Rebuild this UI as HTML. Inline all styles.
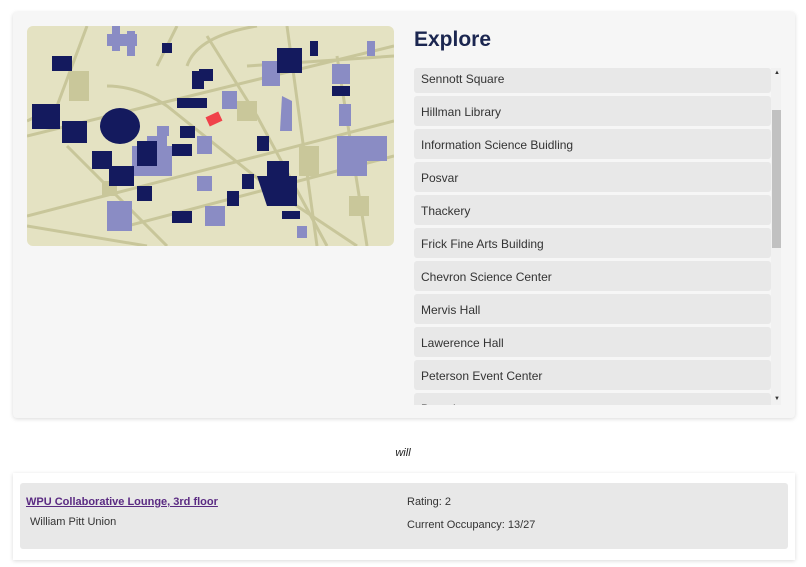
<!DOCTYPE html>
<html><head><style>
body{margin:0;width:806px;height:567px;background:#fff;font-family:"Liberation Sans",sans-serif;position:relative;overflow:hidden}
.card{position:absolute;left:13px;top:12px;width:782px;height:406px;background:#f6f6f6;border-radius:4px;box-shadow:0 1px 4px rgba(0,0,0,.15)}
.map{position:absolute;left:27px;top:26px;width:367px;height:220px;border-radius:6px;overflow:hidden}
h1{position:absolute;left:414px;top:28px;margin:0;font-size:21px;font-weight:bold;color:#1b2650}
.list{position:absolute;left:414px;top:68px;width:357px;height:337px;overflow:hidden}
.item{height:30px;margin-bottom:3px;background:#e8e8e8;border-radius:3px;font-size:12px;color:#333;line-height:32px;padding-left:7px}
.sb{position:absolute;left:771px;top:68px;width:10px;height:337px;background:#f1f1f1}
.thumb{position:absolute;left:772px;top:110px;width:9px;height:138px;background:#c1c1c1}
.arr{position:absolute;left:774px;font-size:6px;color:#333}
.will{position:absolute;top:447px;width:806px;text-align:center;font-style:italic;font-size:11px;color:#222}
.card2{position:absolute;left:13px;top:473px;width:782px;height:87px;background:#fff;box-shadow:0 1px 4px rgba(0,0,0,.15)}
.in{position:absolute;left:7px;top:10px;width:768px;height:66px;background:#e8e8e8;border-radius:3px;font-size:11px;color:#333}
</style></head><body>
<div class="card"></div>
<div class="map">
<svg width="367" height="220" viewBox="0 0 367 220">
<rect width="367" height="220" fill="#e4e2c2"/>
<g stroke="#c8c69a" stroke-width="3" fill="none">
<path d="M0 110 L367 20"/><path d="M0 190 L367 95"/><path d="M40 120 L140 220"/><path d="M60 0 L30 80 L0 95"/>
<path d="M180 10 L230 90 L300 220"/><path d="M150 0 L130 40"/><path d="M260 0 L290 220"/><path d="M310 30 L340 220"/>
<path d="M80 60 Q110 60 140 80 L240 160 L330 220"/><path d="M0 200 L120 220"/><path d="M100 200 L367 130"/>
<path d="M220 40 L367 30"/><path d="M160 40 Q170 10 230 0"/>
</g>
<g fill="#c9c79a"><rect x="42" y="45" width="20" height="30"/><rect x="272" y="120" width="20" height="30"/><rect x="210" y="75" width="20" height="20"/><rect x="322" y="170" width="20" height="20"/><rect x="75" y="155" width="15" height="15"/></g>
<g fill="#8a8cc4">
<path d="M80 8 h30 v12 h-30z M85 0 h8 v25 h-8z M100 5 h8 v25 h-8z"/><rect x="235" y="35" width="18" height="25"/><rect x="195" y="65" width="15" height="18"/>
<rect x="305" y="38" width="18" height="20"/><rect x="312" y="78" width="12" height="22"/><path d="M310 110 h50 v25 h-20 v15 h-30z"/>
<path d="M105 120 h40 v30 h-40z M120 110 h20 v40 h-20z"/><rect x="80" y="175" width="25" height="30"/><rect x="170" y="110" width="15" height="18"/>
<path d="M255 70 l10 5 v30 h-12z"/><rect x="170" y="150" width="15" height="15"/><rect x="130" y="100" width="12" height="10"/>
<rect x="340" y="15" width="8" height="15"/><rect x="178" y="180" width="20" height="20"/><rect x="270" y="200" width="10" height="12"/>
</g>
<g fill="#141a5e">
<rect x="25" y="30" width="20" height="15"/><rect x="5" y="78" width="28" height="25"/><rect x="35" y="95" width="25" height="22"/>
<ellipse cx="93" cy="100" rx="20" ry="18"/><rect x="65" y="125" width="20" height="18"/><rect x="82" y="140" width="25" height="20"/>
<rect x="110" y="115" width="20" height="25"/><rect x="165" y="45" width="12" height="18"/><rect x="172" y="43" width="14" height="12"/>
<rect x="150" y="72" width="30" height="10"/><rect x="153" y="100" width="15" height="12"/><rect x="145" y="118" width="20" height="12"/>
<rect x="240" y="135" width="22" height="20"/><path d="M230 150 h40 v30 h-30z"/><rect x="255" y="185" width="18" height="8"/>
<rect x="250" y="22" width="25" height="25"/><rect x="283" y="15" width="8" height="15"/><rect x="305" y="60" width="18" height="10"/>
<rect x="200" y="165" width="12" height="15"/><rect x="145" y="185" width="20" height="12"/><rect x="215" y="148" width="12" height="15"/>
<rect x="110" y="160" width="15" height="15"/><rect x="135" y="17" width="10" height="10"/><rect x="230" y="110" width="12" height="15"/>
</g>
<rect x="180" y="88" width="14" height="10" fill="#f0424a" transform="rotate(-25 187 93)"/>
</svg>
</div>
<h1>Explore</h1>
<div class="list" id="l">
<div class="item" style="height:25px;line-height:22px">Sennott Square</div>
<div class="item">Hillman Library</div>
<div class="item">Information Science Buidling</div>
<div class="item">Posvar</div>
<div class="item">Thackery</div>
<div class="item">Frick Fine Arts Building</div>
<div class="item">Chevron Science Center</div>
<div class="item">Mervis Hall</div>
<div class="item">Lawerence Hall</div>
<div class="item">Peterson Event Center</div>
<div class="item">Benedum</div>
</div>
<div class="sb"></div><div class="thumb"></div>
<div class="arr" style="top:70px">▲</div><div class="arr" style="top:396px">▼</div>
<div class="will">will</div>
<div class="card2"><div class="in">
<div style="position:absolute;left:6px;top:13px;font-weight:bold;font-size:11px;color:#5a2a82;text-decoration:underline">WPU Collaborative Lounge, 3rd floor</div>
<div style="position:absolute;left:10px;top:33px">William Pitt Union</div>
<div style="position:absolute;left:387px;top:13px">Rating: 2</div>
<div style="position:absolute;left:387px;top:36px">Current Occupancy: 13/27</div>
</div></div>
</body></html>
